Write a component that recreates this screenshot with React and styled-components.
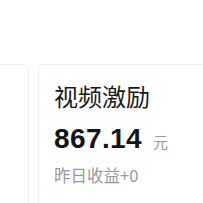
import React from 'react';
import styled, { createGlobalStyle } from 'styled-components';

const Global = createGlobalStyle`
  html, body { margin: 0; padding: 0; background: #fff; }
  body { font-family: "Noto Sans CJK SC", "Liberation Sans", sans-serif; }
`;

const Page = styled.div`
  width: 203px;
  height: 203px;
  overflow: hidden;
  box-sizing: border-box;
  padding-top: 64px;
`;

const Row = styled.div`
  display: flex;
  gap: 9px;
  margin-left: -170px;
`;

const Card = styled.div`
  flex: 0 0 199px;
  height: 160px;
  box-sizing: border-box;
  border: 1px solid #efeff1;
  border-radius: 5px;
  padding: 14px 0 0 15px;
  background: #fff;
`;

const Title = styled.div`
  font-size: 24px;
  line-height: 34px;
  color: #1a1a1a;
`;

const Amount = styled.div`
  display: flex;
  align-items: baseline;
  gap: 11px;
  margin-top: 9px;
`;

const Value = styled.span`
  font-family: "Liberation Sans", "Noto Sans", sans-serif;
  font-weight: 700;
  font-size: 28px;
  letter-spacing: 0.4px;
  line-height: 34px;
  color: #141414;
`;

const Unit = styled.span`
  font-size: 15px;
  color: #999aa0;
`;

const Sub = styled.div`
  font-size: 16.5px;
  line-height: 24px;
  color: #999aa0;
  margin-top: 7px;
`;

export default function App() {
  return (
    <Page>
      <Global />
      <Row>
        <Card />
        <Card>
          <Title>视频激励</Title>
          <Amount>
            <Value>867.14</Value>
            <Unit>元</Unit>
          </Amount>
          <Sub>昨日收益+0</Sub>
        </Card>
      </Row>
    </Page>
  );
}
